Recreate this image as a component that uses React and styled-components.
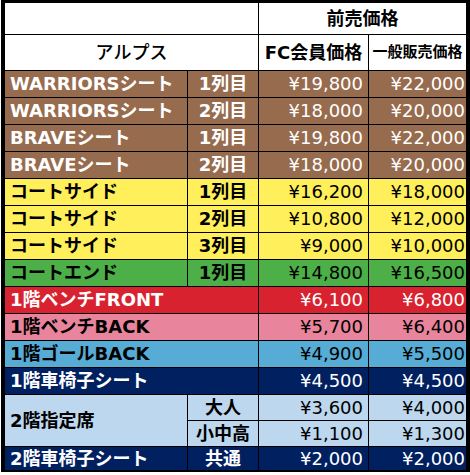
import React from "react";
import styled, { createGlobalStyle } from "styled-components";

const GlobalStyle = createGlobalStyle`
  html, body {
    margin: 0;
    padding: 0;
    background: #fff;
  }
`;

// colour sets per seat group
const tones = {
  brown: { bg: "#976b4d", fg: "#fff" },
  yellow: { bg: "#ffef5b", fg: "#000" },
  green: { bg: "#4caf47", fg: "#000" },
  red: { bg: "#d9222f", fg: "#fff" },
  pink: { bg: "#e8849b", fg: "#000" },
  sky: { bg: "#56acd5", fg: "#000" },
  navy: { bg: "#002060", fg: "#fff" },
  pale: { bg: "#bdd7ee", fg: "#000" },
  white: { bg: "#fff", fg: "#000" },
};

const Page = styled.div`
  padding-left: 1px;
`;

const Sheet = styled.div`
  display: grid;
  grid-template-columns: 182px 70px 109px 97px;
  grid-template-rows: 31px 35px repeat(12, 26px) 25px 25px 23px;
  gap: 1px;
  width: 461px;
  background: #000;
  padding: 3px 4px 2px 4px;
`;

const Cell = styled.div`
  display: flex;
  align-items: center;
  justify-content: ${(p) =>
    p.$align === "right" ? "flex-end" : p.$align === "center" ? "center" : "flex-start"};
  padding: ${(p) => p.$pad || "0 0 0 5px"};
  grid-column: ${(p) => (p.$span ? `span ${p.$span}` : "auto")};
  grid-row: ${(p) => (p.$rows ? `span ${p.$rows}` : "auto")};
  background: ${(p) => tones[p.$tone].bg};
  color: ${(p) => tones[p.$tone].fg};
  font-family: "DejaVu Sans", "Noto Sans CJK JP", sans-serif;
  font-size: ${(p) => p.$size || 18}px;
  font-weight: ${(p) => p.$weight || 700};
  white-space: nowrap;
  overflow: hidden;
  line-height: 1;
`;

const Label = (props) => <Cell $weight={700} {...props} />;
const Row = (props) => <Cell $align="center" $pad="0" $weight={700} {...props} />;
const Price = ({ last, ...props }) => (
  <Cell $align="right" $pad={last ? "0 1px 0 0" : "0 5px 0 0"} $weight={400} {...props} />
);

const seats = [
  { name: "WARRIORSシート", row: "1列目", fc: "¥19,800", gen: "¥22,000", tone: "brown" },
  { name: "WARRIORSシート", row: "2列目", fc: "¥18,000", gen: "¥20,000", tone: "brown" },
  { name: "BRAVEシート", row: "1列目", fc: "¥19,800", gen: "¥22,000", tone: "brown" },
  { name: "BRAVEシート", row: "2列目", fc: "¥18,000", gen: "¥20,000", tone: "brown" },
  { name: "コートサイド", row: "1列目", fc: "¥16,200", gen: "¥18,000", tone: "yellow" },
  { name: "コートサイド", row: "2列目", fc: "¥10,800", gen: "¥12,000", tone: "yellow" },
  { name: "コートサイド", row: "3列目", fc: "¥9,000", gen: "¥10,000", tone: "yellow" },
  { name: "コートエンド", row: "1列目", fc: "¥14,800", gen: "¥16,500", tone: "green" },
  { name: "1階ベンチFRONT", fc: "¥6,100", gen: "¥6,800", tone: "red" },
  { name: "1階ベンチBACK", fc: "¥5,700", gen: "¥6,400", tone: "pink" },
  { name: "1階ゴールBACK", fc: "¥4,900", gen: "¥5,500", tone: "sky" },
  { name: "1階車椅子シート", fc: "¥4,500", gen: "¥4,500", tone: "navy" },
];

export default function App() {
  return (
    <Page>
      <GlobalStyle />
      <Sheet>
        <Cell $tone="white" $span={2} />
        <Cell $tone="white" $span={2} $align="center" $pad="0">
          前売価格
        </Cell>
        <Cell $tone="white" $span={2} $align="center" $pad="0" $weight={500}>
          アルプス
        </Cell>
        <Cell $tone="white" $align="center" $pad="0">
          FC会員価格
        </Cell>
        <Cell $tone="white" $align="center" $pad="0" $size={15}>
          一般販売価格
        </Cell>

        {seats.map((s, i) => (
          <React.Fragment key={i}>
            <Label $tone={s.tone} $span={s.row ? 1 : 2}>
              {s.name}
            </Label>
            {s.row && <Row $tone={s.tone}>{s.row}</Row>}
            <Price $tone={s.tone}>{s.fc}</Price>
            <Price $tone={s.tone} last>
              {s.gen}
            </Price>
          </React.Fragment>
        ))}

        <Label $tone="pale" $rows={2}>
          2階指定席
        </Label>
        <Row $tone="pale">大人</Row>
        <Price $tone="pale">¥3,600</Price>
        <Price $tone="pale" last>
          ¥4,000
        </Price>
        <Row $tone="pale">小中高</Row>
        <Price $tone="pale">¥1,100</Price>
        <Price $tone="pale" last>
          ¥1,300
        </Price>

        <Label $tone="navy">2階車椅子シート</Label>
        <Row $tone="navy">共通</Row>
        <Price $tone="navy">¥2,000</Price>
        <Price $tone="navy" last>
          ¥2,000
        </Price>
      </Sheet>
    </Page>
  );
}
